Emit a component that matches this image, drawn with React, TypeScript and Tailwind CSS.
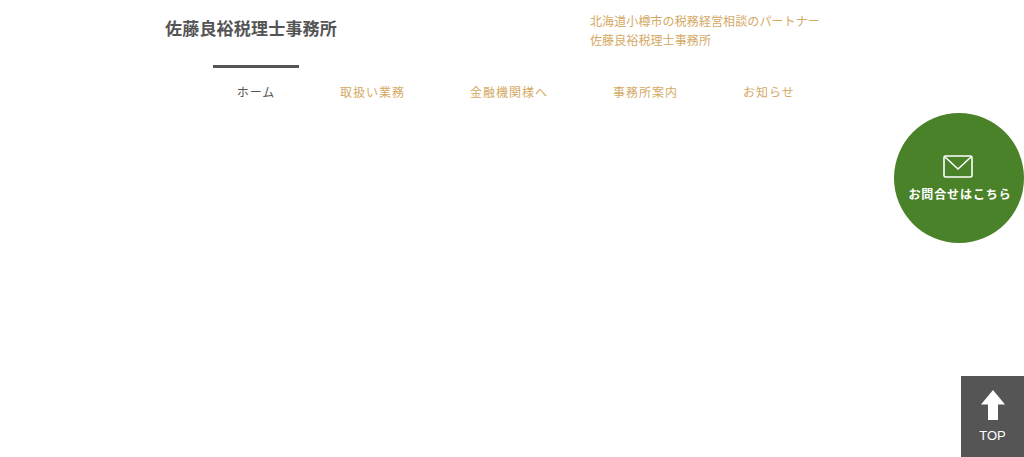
const NAV_ITEMS = ["取扱い業務", "金融機関様へ", "事務所案内", "お知らせ"];

const cjkSans = "font-['Noto_Sans_CJK_JP','Noto_Sans',sans-serif]";

export default function App() {
  return (
    <div className={`relative h-[457px] w-[1024px] overflow-hidden bg-white ${cjkSans}`}>
      <header className="pl-[165px]">
        {/* Logo and tagline */}
        <div className="flex h-[65px] items-start">
          <h1 className="mt-[15px] w-[425px] text-[17px] leading-[25px] font-bold tracking-[0.2px] text-[#555555]">
            佐藤良裕税理士事務所
          </h1>
          <p className="mt-[12px] text-[12px] leading-[18.5px] tracking-[0.1px] text-[#d4a964]">
            北海道小樽市の税務経営相談のパートナー
            <br />
            佐藤良裕税理士事務所
          </p>
        </div>

        {/* Global nav */}
        <nav className="ml-[48px] flex items-start">
          <a className="mr-[41px] flex h-[52px] w-[86px] justify-center border-t-[3px] border-[#555555] pt-[13px] text-[12px] leading-[22px] tracking-[1px] text-[#555555]">
            ホーム
          </a>
          <div className="flex gap-[65px] pt-[16px]">
            {NAV_ITEMS.map((item) => (
              <a key={item} className="text-[12px] leading-[22px] tracking-[1px] text-[#d4a964]">
                {item}
              </a>
            ))}
          </div>
        </nav>
      </header>

      {/* Contact bubble */}
      <a className="absolute top-[113px] left-[894px] flex h-[130px] w-[130px] flex-col items-center rounded-full bg-[#4a8229] pt-[42px] text-white">
        <svg width="30" height="23" viewBox="0 0 30 23" fill="none" stroke="currentColor" strokeWidth="1.6" className="-ml-[2px]">
          <rect x="1" y="1" width="28" height="21" rx="1.5" />
          <path d="M2 2l13 12L28 2" />
        </svg>
        <span className="mt-[6px] ml-[2px] text-[12px] leading-[20px] font-bold tracking-[0.9px] whitespace-nowrap">
          お問合せはこちら
        </span>
      </a>

      {/* Back to top */}
      <a className="absolute top-[376px] left-[961px] flex h-[81px] w-[63px] flex-col items-center bg-[#555555] pt-[14px] text-white">
        <svg width="24" height="30" viewBox="0 0 24 30" fill="currentColor">
          <path d="M12 0L24 14.5H17V30H7V14.5H0Z" />
        </svg>
        <span className="mt-[7px] font-['Liberation_Sans',sans-serif] text-[13px] leading-[18px]">TOP</span>
      </a>
    </div>
  );
}
